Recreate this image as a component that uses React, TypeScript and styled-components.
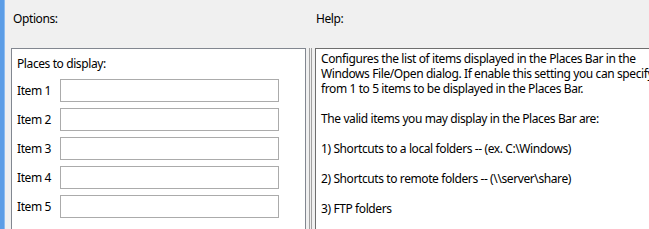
import React, { FC } from 'react';
import styled, { createGlobalStyle } from 'styled-components';

const GlobalStyle = createGlobalStyle`
  html, body {
    margin: 0;
    padding: 0;
    background: #f0f0f0;
  }
  body {
    font-family: "Noto Sans", "Open Sans", sans-serif;
    font-size: 12px;
    letter-spacing: -0.4px;
    color: #000;
  }
`;

const Window = styled.div`
  display: flex;
  width: 649px;
  height: 229px;
  overflow: hidden;
  background: #f0f0f0;
`;

const BlueEdge = styled.div`
  width: 4px;
  flex: none;
  background: #5c9de6;
  border-right: 1px solid #8dbcf0;
`;

const Content = styled.div`
  flex: 1;
  min-width: 0;
  display: grid;
  grid-template-columns: 295px minmax(0, 1fr);
  grid-template-rows: 42px 1fr;
  column-gap: 3px;
  padding: 6px 0 0 6px;
`;

const Caption = styled.div<{ indent: number }>`
  padding-left: ${p => p.indent}px;
  padding-top: 5px;
  line-height: 15px;
`;

const OptionsPanel = styled.div`
  background: #fff;
  border: 1px solid #828790;
  border-bottom: none;
  padding: 7px 0 0 5px;
`;

const PanelTitle = styled.div`
  line-height: 15px;
  margin-bottom: 8px;
`;

const ItemRow = styled.div`
  display: flex;
  align-items: center;
  height: 23px;
  margin-bottom: 6px;
`;

const ItemLabel = styled.label`
  width: 43px;
  line-height: 15px;
`;

const ItemInput = styled.input`
  box-sizing: border-box;
  width: 219px;
  height: 23px;
  margin: 0;
  border: 1px solid #ababab;
  background: #fff;
  outline: none;
`;

const HelpFrame = styled.div`
  min-width: 0;
  border-left: 3px double #a0a0a0;
  padding-left: 3px;
  display: flex;
`;

const HelpBox = styled.div`
  flex: 1;
  min-width: 0;
  background: #fff;
  border: 1px solid #6e6e6e;
  border-right: none;
  border-bottom: none;
  padding: 2px 0 0 5px;
  line-height: 15px;
  overflow: hidden;
`;

const HelpLine = styled.div`
  min-height: 15px;
  white-space: pre;
`;

const helpLines = [
  'Configures the list of items displayed in the Places Bar in the',
  'Windows File/Open dialog. If enable this setting you can specify',
  'from 1 to 5 items to be displayed in the Places Bar.',
  '',
  'The valid items you may display in the Places Bar are:',
  '',
  '1) Shortcuts to a local folders -- (ex. C:\\Windows)',
  '',
  '2) Shortcuts to remote folders -- (\\\\server\\share)',
  '',
  '3) FTP folders',
];

const items = ['Item 1', 'Item 2', 'Item 3', 'Item 4', 'Item 5'];

const App: FC = () => {
  return (
    <Window>
      <GlobalStyle />
      <BlueEdge />
      <Content>
        <Caption indent={2}>Options:</Caption>
        <Caption indent={7}>Help:</Caption>

        <OptionsPanel>
          <PanelTitle>Places to display:</PanelTitle>
          {items.map(item => (
            <ItemRow key={item}>
              <ItemLabel>{item}</ItemLabel>
              <ItemInput type="text" />
            </ItemRow>
          ))}
        </OptionsPanel>

        <HelpFrame>
          <HelpBox>
            {helpLines.map((line, i) => (
              <HelpLine key={i}>{line}</HelpLine>
            ))}
          </HelpBox>
        </HelpFrame>
      </Content>
    </Window>
  );
};

export default App;
